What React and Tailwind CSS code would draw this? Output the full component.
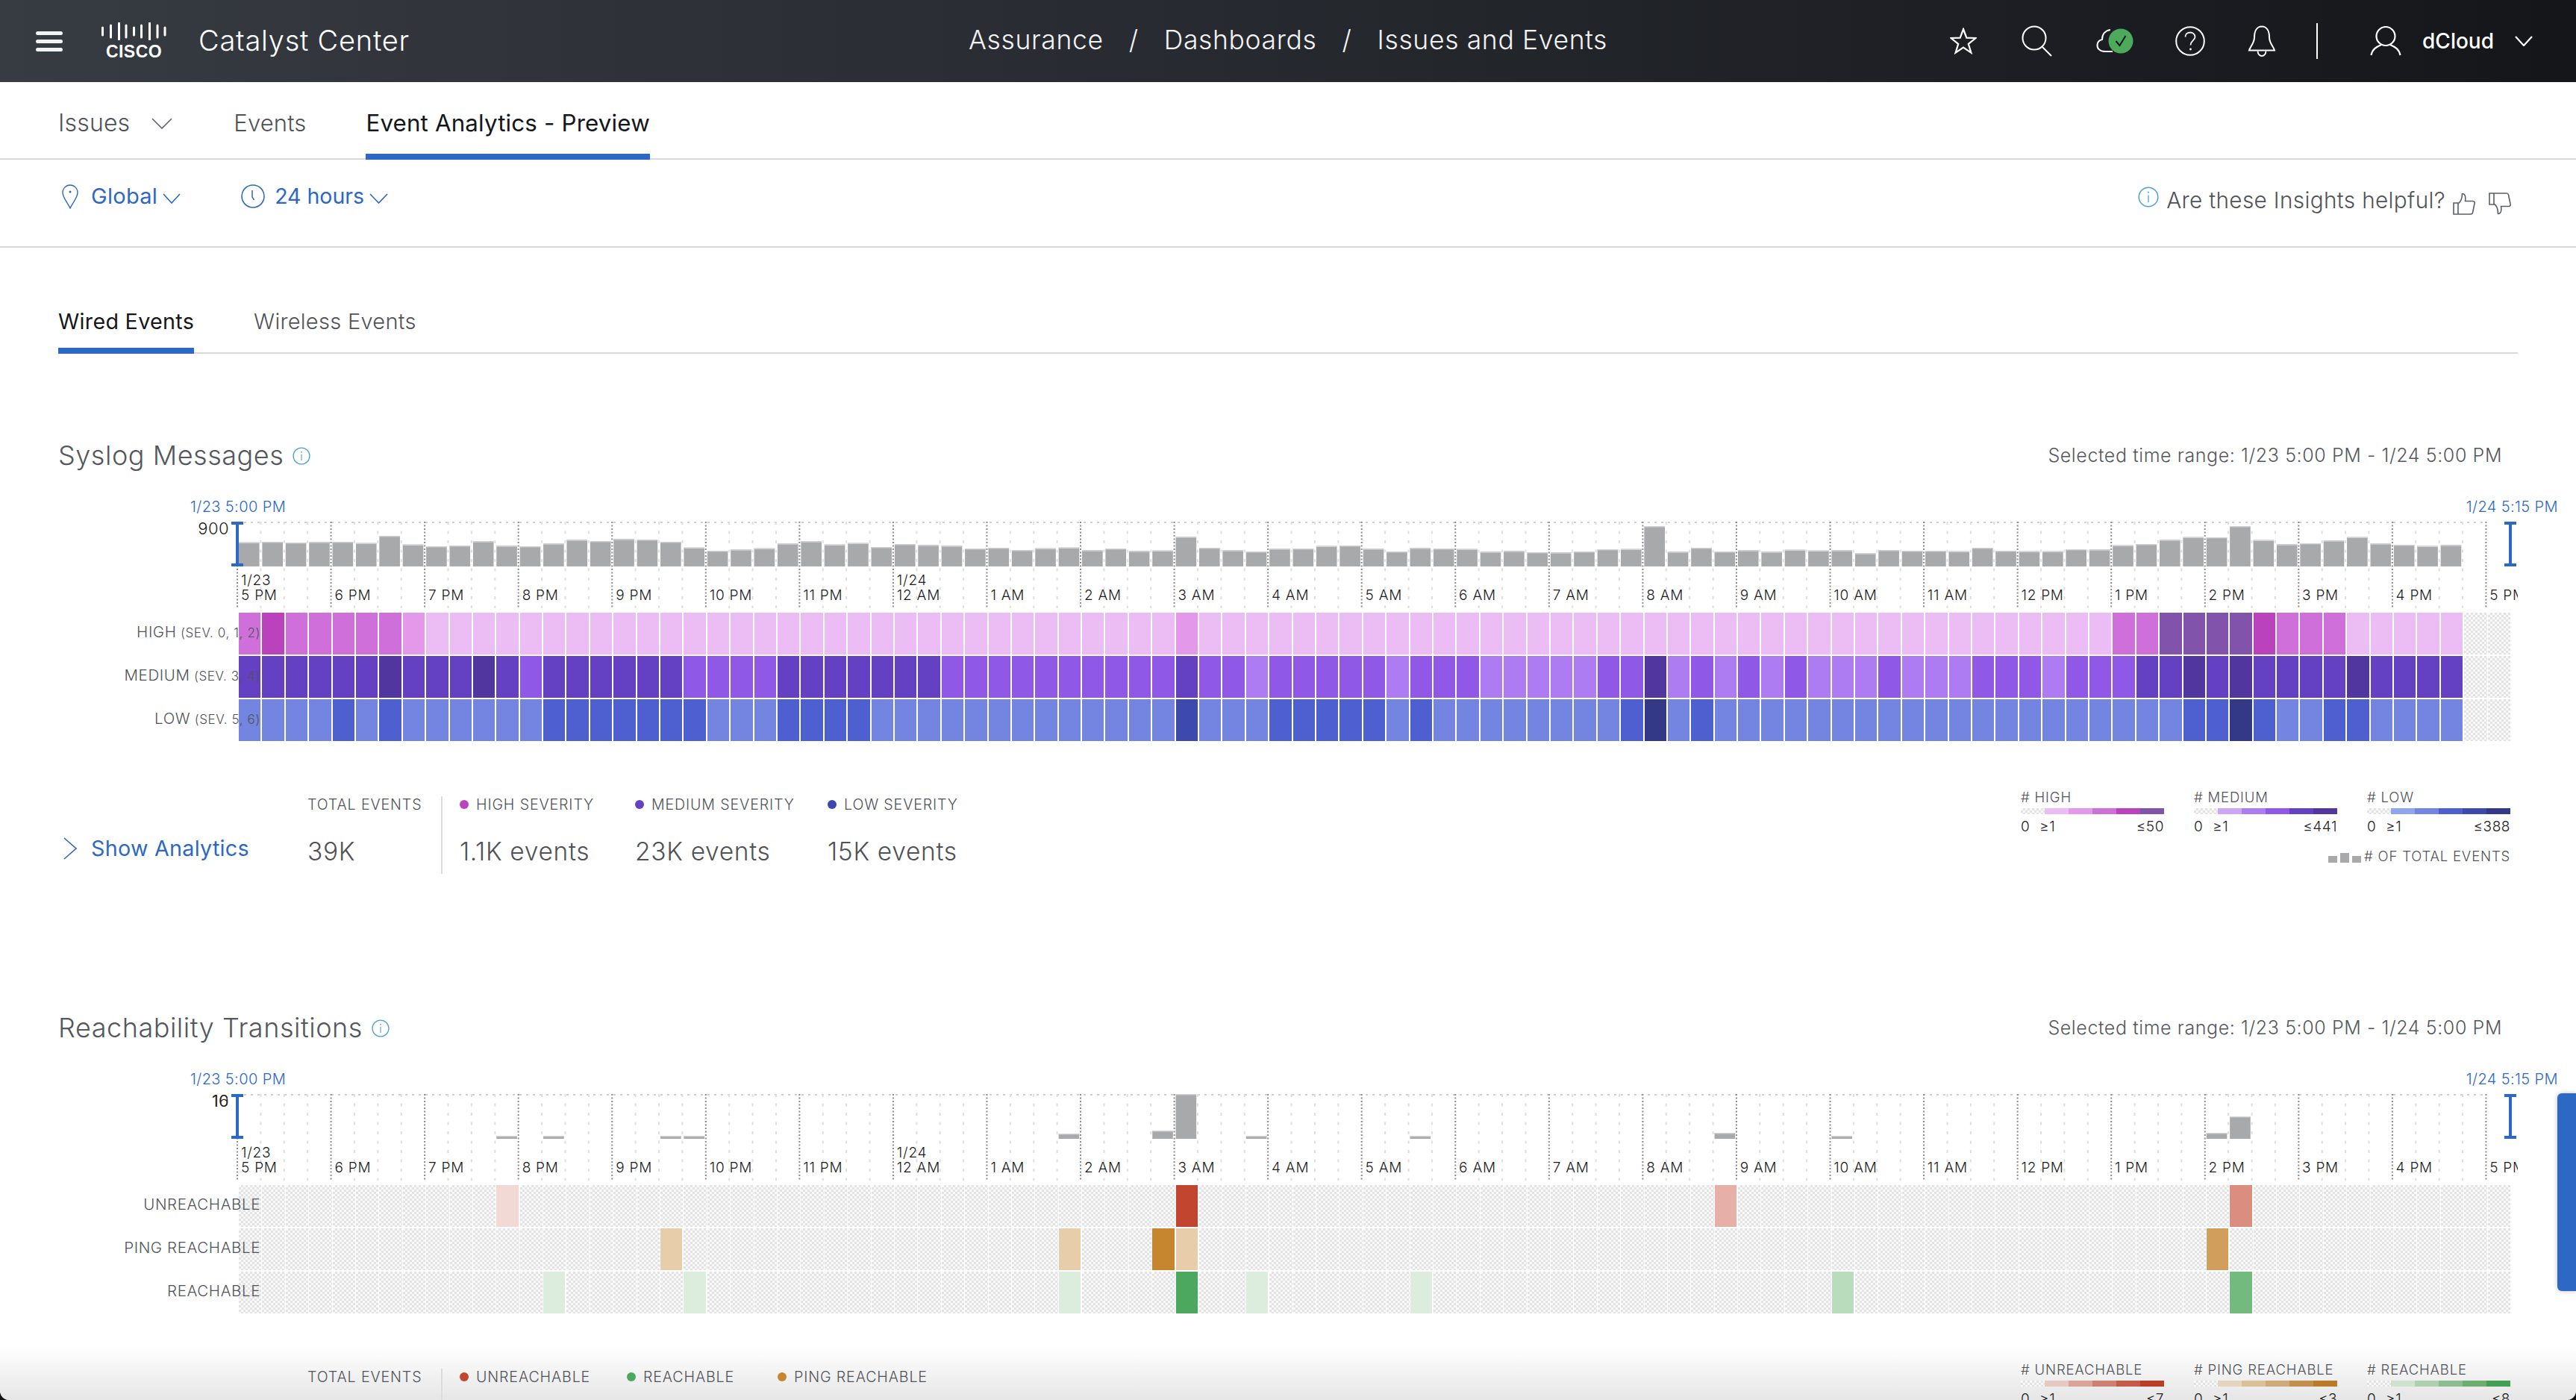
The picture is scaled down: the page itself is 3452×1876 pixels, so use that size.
import React from "react";

const BLUE = "#2d68c4";
const TOPS = [233,231,234,232,231,236,207,242,249,246,229,247,249,238,223,228,220,222,231,254,267,262,257,238,229,242,236,252,240,244,247,258,255,264,257,254,265,258,268,266,211,255,265,270,259,258,248,246,259,270,256,258,260,271,268,273,274,270,261,260,168,271,255,270,265,271,263,266,265,277,264,267,267,269,255,267,269,269,261,262,245,240,223,212,213,168,224,241,237,226,212,238,243,248,244];
const SYSLOG_BARS = TOPS.map((t, i) => [i, (330 - t) / 3]);
const REACH_BARS = [[11,4],[13,4],[18,4],[19,4],[35,7],[39,11],[40,60],[43,4],[50,4],[63,8],[68,4],[84,8],[85,30]];

const HOURS = ["5 PM","6 PM","7 PM","8 PM","9 PM","10 PM","11 PM","12 AM","1 AM","2 AM","3 AM","4 AM","5 AM","6 AM","7 AM","8 AM","9 AM","10 AM","11 AM","12 PM","1 PM","2 PM","3 PM","4 PM","5 PM"];

const HATCH = "bg-[repeating-conic-gradient(#e3e3e3_0%_25%,#f9f9f9_0%_50%)] bg-[length:6px_6px]";

const sevRows = [
  { label: "HIGH", sub: "(SEV. 0, 1, 2)",
    data: "34333332" + "1".repeat(32) + "2" + "1".repeat(39) + "335555433311111",
    colors: [HATCH, "bg-[#ecbcf5]", "bg-[#e498e9]", "bg-[#cf70da]", "bg-[#ba42bc]", "bg-[#8253ab]"] },
  { label: "MEDIUM", sub: "(SEV. 3, 4)",
    data: "444444544454344444433" + "334444444" + "3333333333" + "4" + "3323333323" + "33" + "22222" + "33" + "5" + "232323" + "222" + "3" + "222" + "333" + "2" + "3" + "3344545444454444",
    colors: [HATCH, "bg-[#cba7f6]", "bg-[#ad7cf3]", "bg-[#8f58e7]", "bg-[#6440c2]", "bg-[#52369f]"] },
  { label: "LOW", sub: "(SEV. 5, 6)",
    data: "2222" + "3" + "2" + "3" + "222222" + "3333333" + "2" + "22" + "3333" + "2".repeat(13) + "4" + "222" + "3333323" + "2".repeat(8) + "3" + "5" + "2" + "3" + "2".repeat(16) + "2222" + "3353223322222".slice(0, 12),
    colors: [HATCH, "bg-[#8fa6ee]", "bg-[#7385e0]", "bg-[#4e60cf]", "bg-[#3d49ad]", "bg-[#333887]"] },
];

const reachRow = (marks) => {
  const a = Array(97).fill(0);
  Object.entries(marks).forEach(([k, v]) => { a[Number(k)] = v; });
  return a.join("");
};

const reachRows = [
  { label: "UNREACHABLE", data: reachRow({ 11: 1, 40: 4, 63: 2, 85: 3 }),
    colors: [HATCH, "bg-[#f3d9d5]", "bg-[#e6b0a8]", "bg-[#db8d80]", "bg-[#c2462f]"] },
  { label: "PING REACHABLE", data: reachRow({ 18: 1, 35: 1, 39: 3, 40: 1, 84: 2 }),
    colors: [HATCH, "bg-[#e8cdaa]", "bg-[#d19f5b]", "bg-[#c5862f]"] },
  { label: "REACHABLE", data: reachRow({ 13: 1, 19: 1, 35: 1, 40: 3, 43: 1, 50: 1, 68: 4, 85: 2 }),
    colors: [HATCH, "bg-[#dcecdd]", "bg-[#72ba7d]", "bg-[#4ca85e]", "bg-[#b9dcbc]"] },
];

function Chevron({ className = "", color = "currentColor", w = 24, h = 14, sw = 2 }) {
  return (
    <svg width={w} height={h} viewBox={`0 0 ${w} ${h}`} className={className} fill="none">
      <path d={`M1 1 L${w / 2} ${h - 1} L${w - 1} 1`} stroke={color} strokeWidth={sw} />
    </svg>
  );
}

function InfoIcon({ size = 28, color = "#4d9fd6" }) {
  return (
    <svg width={size} height={size} viewBox="0 0 28 28" fill="none">
      <circle cx="14" cy="14" r="12.8" stroke={color} strokeWidth="1.5" />
      <path d="M14 11.5V21" stroke={color} strokeWidth="1.3" />
      <circle cx="14" cy="7.8" r="1" fill={color} />
    </svg>
  );
}

function CiscoLogo() {
  const xs = [1.5, 12.5, 23.5, 33, 43.5, 53.5, 64.5, 75, 85];
  const hs = [10, 16, 23, 16, 10, 16, 23, 16, 10];
  return (
    <div className="flex flex-col items-center w-[87px] shrink-0">
      <svg width="87" height="24" viewBox="0 0 87 24" fill="none">
        {xs.map((x, i) => (
          <line key={i} x1={x} x2={x} y1={12 - hs[i] / 2} y2={12 + hs[i] / 2} stroke="#fff" strokeWidth="3" strokeLinecap="round" />
        ))}
      </svg>
      <span className="font-['Liberation_Sans',sans-serif] font-bold text-[23px] leading-[22px] tracking-[0.02em] text-white mt-[4px]">CISCO</span>
    </div>
  );
}

function Header() {
  const s = "#fff";
  return (
    <div className="grid grid-cols-[1fr_auto_1fr] items-center h-[110px] bg-[linear-gradient(90deg,#373b42,#14161a)] text-white">
      <div className="flex items-center pl-[48px]">
        <svg width="36" height="30" viewBox="0 0 36 30" fill="#f2f2f2" className="shrink-0">
          <rect y="2" width="36" height="5" rx="2.5" />
          <rect y="13" width="36" height="5" rx="2.5" />
          <rect y="24" width="36" height="5" rx="2.5" />
        </svg>
        <div className="ml-[52px]"><CiscoLogo /></div>
        <span className="ml-[43px] pb-[3px] text-[38px] leading-[44px] font-light tracking-[0.02em]">Catalyst Center</span>
      </div>
      <div className="flex items-center pb-[3px] text-[35.5px] leading-[44px] font-light text-[#f2f2f2] tracking-[0.018em]">
        <span>Assurance</span>
        <span className="mx-[34px]">/</span>
        <span>Dashboards</span>
        <span className="mx-[34px]">/</span>
        <span>Issues and Events</span>
      </div>
      <div className="flex items-center justify-end pr-[58px]">
        <svg width="36" height="36" viewBox="0 0 36 36" fill="none">
          <path d="M18 2 L22.3 13.6 L34.5 14 L24.8 21.8 L28.4 33.6 L18 26.6 L7.6 33.6 L11.2 21.8 L1.5 14 L13.7 13.6 Z" stroke={s} strokeWidth="2.2" strokeLinejoin="miter" />
        </svg>
        <svg width="42" height="42" viewBox="0 0 42 42" fill="none" className="ml-[60px]">
          <circle cx="17" cy="17" r="15.5" stroke={s} strokeWidth="2" />
          <path d="M28 29 L40 41" stroke={s} strokeWidth="2" />
        </svg>
        <svg width="50" height="34" viewBox="0 0 50 34" fill="none" className="ml-[58px]">
          <path d="M22 31 H12 C5 31 1 27 1.5 22 C2 18 5 15.5 8 15 C8 8 12 3 19 2" stroke={s} strokeWidth="2" />
          <circle cx="33" cy="17" r="16.5" fill="#4daa5d" />
          <path d="M26.5 17 L31.5 23 L39.5 10" stroke="#17191d" strokeWidth="2" />
        </svg>
        <svg width="40" height="40" viewBox="0 0 40 40" fill="none" className="ml-[56px]">
          <circle cx="20" cy="20" r="18.8" stroke={s} strokeWidth="2" />
          <path d="M13.5 14.5 C13.5 10.5 16.5 8.5 20 8.5 C23.5 8.5 26.5 11 26.5 14.5 C26.5 19 20.5 19.5 20.5 25.5" stroke={s} strokeWidth="1.8" />
          <circle cx="20.5" cy="31" r="1.4" fill={s} />
        </svg>
        <svg width="38" height="42" viewBox="0 0 38 42" fill="none" className="ml-[57px]">
          <path d="M19 1.5 C12 1.5 9 8 9 16 C9 24 3.5 28 2 33.5 H36 C34.5 28 29 24 29 16 C29 8 26 1.5 19 1.5 Z" stroke={s} strokeWidth="2" />
          <path d="M13.5 34.5 C14 43 24 43 24.5 34.5" stroke={s} strokeWidth="2" />
        </svg>
        <div className="ml-[54px] w-[2px] h-[48px] bg-white" />
        <svg width="42" height="40" viewBox="0 0 42 40" fill="none" className="ml-[70px]">
          <ellipse cx="21" cy="13.5" rx="12.5" ry="12.5" stroke={s} strokeWidth="2.2" />
          <path d="M1.5 39 C3 31 8 28 15 25 M40.5 39 C39 31 34 28 27 25" stroke={s} strokeWidth="2.2" />
        </svg>
        <span className="ml-[28px] text-[28px] leading-[40px] font-medium">dCloud</span>
        <Chevron className="ml-[28px]" color="#fff" w={24} h={14} sw={2.2} />
      </div>
    </div>
  );
}

function SubTabs() {
  const tab = "h-[104px] pt-[36px] leading-[38px] tracking-[0.005em]";
  return (
    <div className="flex h-[104px] border-b-2 border-[#d9d9dd] pl-[78px]">
      <div className={`${tab} text-[32px] flex items-start font-light text-[#4f5359]`}>
        <span>Issues</span>
        <Chevron className="ml-[29px] mt-[12px]" color="#5f6368" w={28} h={15} sw={1.6} />
      </div>
      <div className={`${tab} text-[31px] ml-[82px] font-light text-[#4f5359]`}>Events</div>
      <div className={`${tab} text-[31.3px] ml-[80px] text-[#15171a] font-normal border-b-[8px] border-[#2d68c4]`}>Event Analytics - Preview</div>
    </div>
  );
}

function Thumb({ flip }) {
  return (
    <svg width="30" height="30" viewBox="0 0 30 30" fill="none" className={flip ? "ml-[18px] mt-[7px] -scale-y-100" : "ml-[10px] mt-[7px]"}>
      <path d="M1 14 H7 V29 H1 Z M7 15 C10 13 12.5 8 12.5 1.5 C16 1.5 17.5 5 16.5 11.5 H27 C29 11.5 29.5 13.5 29 15 L26.5 27 C26 28.5 25 29 24 29 H7" stroke="#5b5f66" strokeWidth="1.6" />
    </svg>
  );
}

function FilterRow() {
  const c = BLUE;
  return (
    <div className="flex items-start justify-between h-[118px] border-b-2 border-[#d9d9dd] pl-[83px] pr-[87px]">
      <div className="flex items-start pt-[32px] text-[#2d68c4] text-[29px] leading-[34px] tracking-[0.01em]">
        <svg width="22" height="33" viewBox="0 0 22 33" fill="none" className="mt-[1px]">
          <path d="M11 1 C5 1 1 6 1 11 C1 18 8 25 11 32 C14 25 21 18 21 11 C21 6 17 1 11 1 Z" stroke={c} strokeWidth="1.4" />
          <circle cx="11" cy="10" r="1.5" fill={c} />
        </svg>
        <span className="ml-[17px]">Global</span>
        <Chevron className="ml-[7px] mt-[13px]" color={c} w={24} h={14} sw={1.6} />
        <svg width="32" height="32" viewBox="0 0 32 32" fill="none" className="ml-[81px] mt-[1px]">
          <circle cx="16" cy="16" r="15" stroke={c} strokeWidth="1.6" />
          <path d="M15 8 V17 L17.5 21" stroke={c} strokeWidth="1.5" />
        </svg>
        <span className="ml-[13px] text-[28.5px] tracking-normal">24 hours</span>
        <Chevron className="ml-[7px] mt-[13px]" color={c} w={25} h={14} sw={1.6} />
      </div>
      <div className="flex items-start pt-[37px]">
        <span className="mt-[-1px]"><InfoIcon size={28} /></span>
        <span className="ml-[10px] text-[29.7px] leading-[34px] font-light text-[#4f5359] tracking-[0.012em]">Are these Insights helpful?</span>
        <Thumb />
        <Thumb flip />
      </div>
    </div>
  );
}

function WiredTabs() {
  return (
    <div className="mx-[78px] flex h-[142px] border-b-2 border-[#d9d9dd]">
      <div className="h-[142px] pt-[80px] text-[28.7px] leading-[38px] text-[#15171a] border-b-[8px] border-[#2d68c4] tracking-[0.01em]">Wired Events</div>
      <div className="h-[142px] pt-[80px] ml-[80px] text-[29px] leading-[38px] font-light text-[#4f5359] tracking-[0.01em]">Wireless Events</div>
    </div>
  );
}

const PITCH = 31.39;

function PlotArt({ bars }) {
  const minor = [];
  for (let i = 0; i <= 96; i++) if (i % 4 !== 0) minor.push(i);
  const major = [];
  for (let i = 0; i <= 24; i++) major.push(i);
  return (
    <svg width="3056" height="122" viewBox="0 0 3056 122" className="absolute inset-0 overflow-visible" fill="none">
      <line x1="0" x2="3014" y1="1" y2="1" stroke="#cfcfcf" strokeWidth="2" strokeDasharray="3 6" />
      {minor.map((i) => (
        <line key={i} x1={i * PITCH} x2={i * PITCH} y1="0" y2="116" stroke="#dedede" strokeWidth="2" strokeDasharray="4 8.5" />
      ))}
      {major.map((i) => (
        <line key={i} x1={i * 4 * PITCH} x2={i * 4 * PITCH} y1="0" y2="117" stroke="#8b8b8b" strokeWidth="2" strokeDasharray="2 2.5" />
      ))}
      {bars.map(([i, h]) => (
        <g key={i}>
          <rect x={2 + i * PITCH} y={60 - h} width="27.6" height={h} fill="#a8a9ab" />
          <rect x={2 + i * PITCH} y={60 - h} width="27.6" height="1.4" fill="#d3d3d5" />
        </g>
      ))}
      <g fill={BLUE}>
        <rect x="-8" y="0" width="16" height="4" />
        <rect x="-8" y="56" width="16" height="4" />
        <rect x="-2" y="0" width="4" height="60" />
        <rect x="3038" y="0" width="16" height="4" />
        <rect x="3038" y="56" width="16" height="4" />
        <rect x="3044" y="0" width="4" height="60" />
      </g>
    </svg>
  );
}

function Plot({ bars, max }) {
  return (
    <div className="relative ml-[318px] w-[3056px] h-[122px] mt-[8px]">
      <PlotArt bars={bars} />
      <div className="absolute right-full top-[-3px] mr-[11px] text-[22px] leading-[24px] font-light text-[#222] tracking-[0.02em] grid">
        {max.map((m) => (<span key={m} className="col-start-1 row-start-1 text-right">{m}</span>))}
      </div>
      <div className="relative flex h-[108px] items-end overflow-x-clip">
        {HOURS.map((h, i) => (
          <div key={i} className="w-[125.56px] shrink-0 pl-[5px] text-[19px] leading-[19.5px] font-light text-[#1c1c1e] tracking-[0.04em] whitespace-nowrap">
            {i === 0 && <div>1/23</div>}
            {i === 7 && <div>1/24</div>}
            <div>{h}</div>
          </div>
        ))}
      </div>
    </div>
  );
}

function HeatRows({ rows }) {
  return (
    <div className="flex flex-col gap-y-[2px]">
      {rows.map((r) => (
        <div key={r.label} className="flex h-[56px]">
          <div className="w-[349px] -mr-[29px] shrink-0 relative z-10 text-right text-[20.5px] leading-[56px] font-light text-[#4f5359] tracking-[0.03em] whitespace-nowrap -mt-[2px]">
            {r.label}
            {r.sub && <span className="text-[17px]"> {r.sub}</span>}
          </div>
          <div className="grid w-[3043px] h-[56px] grid-cols-[repeat(97,1fr)] gap-x-[2px]">
            {Array.from({ length: 97 }).map((_, i) => {
              const lv = Number(r.data[i] || 0);
              return <div key={i} className={lv === 0 ? `${r.colors[0]} -mr-[1px]` : r.colors[lv]} />;
            })}
          </div>
        </div>
      ))}
    </div>
  );
}

function Legend({ items, showTotal }) {
  return (
    <div className="-mt-[9px] pr-[10px] shrink-0">
      <div className="flex gap-x-[40px]">
        {items.map((l) => (
          <div key={l.label} className="w-[192px]">
            <div className="h-[20px] text-[18.5px] leading-[20px] font-light text-[#4f5359] tracking-[0.045em] whitespace-nowrap">{l.label}</div>
            <div className="mt-[5px] flex h-[8px]">
              <div className={`flex-1 ${HATCH}`} />
              {l.colors.map((c) => (<div key={c} className={`flex-1 ${c}`} />))}
            </div>
            <div className="mt-[7px] h-[20px] flex text-[19px] leading-[20px] font-light text-[#222] tracking-[0.03em]">
              <span>0</span>
              <span className="ml-[13px]">≥1</span>
              <span className="ml-auto">{l.max}</span>
            </div>
          </div>
        ))}
      </div>
      {showTotal && (
        <div className="mt-[19px] h-[20px] flex items-end justify-end text-[18.5px] leading-[20px] font-light text-[#4f5359] tracking-[0.045em]">
          <svg width="44" height="13" viewBox="0 0 44 13" fill="#a8a9ab" className="mb-[1px]">
            <rect x="0" y="4" width="12" height="9" />
            <rect x="16" y="0" width="12" height="13" />
            <rect x="32" y="4" width="12" height="9" />
          </svg>
          <span className="ml-[4px]"># OF TOTAL EVENTS</span>
        </div>
      )}
    </div>
  );
}

function Stats({ cols, total, legend, showTotal, showAnalytics }) {
  const label = "h-[22px] text-[19.6px] leading-[22px] font-light text-[#4f5359] tracking-[0.045em] whitespace-nowrap";
  const value = "mt-[35px] h-[34px] text-[33.5px] leading-[34px] font-light text-[#4f5359] tracking-[0.02em] whitespace-nowrap";
  return (
    <div className="flex justify-between mt-[74px] mx-[78px] h-[104px] items-start">
      <div className="flex items-start">
        <div className="w-[334px] mt-[52px] h-[36px] pl-[7px] flex items-center text-[#2d68c4] text-[28.7px] leading-[36px] tracking-[0.01em]">
          {showAnalytics && (
            <>
              <svg width="18" height="30" viewBox="0 0 18 30" fill="none" className="shrink-0">
                <path d="M1 1 L17 15 L1 29" stroke={BLUE} strokeWidth="1.6" />
              </svg>
              <span className="ml-[19px] whitespace-nowrap">Show Analytics</span>
            </>
          )}
        </div>
        <div className="w-[179px]">
          <div className={label}>TOTAL EVENTS</div>
          <div className={value}>39K</div>
        </div>
        <div className="w-[2px] h-[104px] bg-[#dcdcdc]" />
        <div className="flex pl-[23px]">
          {cols.map((c) => (
            <div key={c.name} className={c.w}>
              <div className={`flex items-center ${label}`}>
                <span className={`w-[12px] h-[12px] rounded-full shrink-0 mr-[10px] ${c.dot}`} />
                {c.name}
              </div>
              <div className={value}>{c.value}</div>
            </div>
          ))}
        </div>
      </div>
      <Legend items={legend} showTotal={showTotal} />
    </div>
  );
}

function Section({ title, max, bars, rows, stats }) {
  return (
    <section className="pb-[184px]">
      <div className="mx-[78px] pr-[21px] flex items-center justify-between h-[44px]">
        <div className="flex items-center">
          <span className="text-[36px] leading-[44px] font-light text-[#54585e] tracking-[0.015em]">{title}</span>
          <span className="ml-[12px] mt-[2px]"><InfoIcon size={24} /></span>
        </div>
        <span className="text-[25px] leading-[44px] font-light text-[#54585e] tracking-[0.024em]">Selected time range: 1/23 5:00 PM - 1/24 5:00 PM</span>
      </div>
      <div className="mt-[35px] mb-[1px] pl-[255px] pr-[24px] flex justify-between h-[24px] text-[#2d68c4] text-[20px] leading-[24px] font-light tracking-[0.02em]">
        <span>1/23 5:00 PM</span>
        <span>1/24 5:15 PM</span>
      </div>
      <Plot bars={bars} max={max} />
      <HeatRows rows={rows} />
      <Stats {...stats} />
    </section>
  );
}

export default function App() {
  return (
    <div className="relative w-[3452px] h-[1876px] overflow-hidden bg-white font-['Inter','Noto_Sans',sans-serif]">
      <div className="absolute inset-x-0 bottom-0 h-[72px] bg-gradient-to-b from-white to-[#e6e6e6]" />
      <div className="relative">
        <Header />
        <SubTabs />
        <FilterRow />
        <WiredTabs />
        <div className="pt-[114px]">
          <Section
            title="Syslog Messages"
            max={["900"]}
            bars={SYSLOG_BARS}
            rows={sevRows}
            stats={{
              showAnalytics: true,
              showTotal: true,
              cols: [
                { name: "HIGH SEVERITY", value: "1.1K events", dot: "bg-[#ba42bc]", w: "w-[235px]" },
                { name: "MEDIUM SEVERITY", value: "23K events", dot: "bg-[#6440c2]", w: "w-[258px]" },
                { name: "LOW SEVERITY", value: "15K events", dot: "bg-[#3d49ad]", w: "w-[200px]" },
              ],
              legend: [
                { label: "# HIGH", max: "≤50", colors: ["bg-[#ecbcf5]", "bg-[#e498e9]", "bg-[#cf70da]", "bg-[#ba42bc]", "bg-[#8253ab]"] },
                { label: "# MEDIUM", max: "≤441", colors: ["bg-[#cba7f6]", "bg-[#ad7cf3]", "bg-[#8f58e7]", "bg-[#6440c2]", "bg-[#52369f]"] },
                { label: "# LOW", max: "≤388", colors: ["bg-[#8fa6ee]", "bg-[#7385e0]", "bg-[#4e60cf]", "bg-[#3d49ad]", "bg-[#333887]"] },
              ],
            }}
          />
          <Section
            title="Reachability Transitions"
            max={["10", "16"]}
            bars={REACH_BARS}
            rows={reachRows}
            stats={{
              showAnalytics: false,
              showTotal: false,
              cols: [
                { name: "UNREACHABLE", value: "", dot: "bg-[#c2462f]", w: "w-[224px]" },
                { name: "REACHABLE", value: "", dot: "bg-[#4ca85e]", w: "w-[202px]" },
                { name: "PING REACHABLE", value: "", dot: "bg-[#c5862f]", w: "w-[220px]" },
              ],
              legend: [
                { label: "# UNREACHABLE", max: "≤7", colors: ["bg-[#e6c9c3]", "bg-[#d9a398]", "bg-[#cd7f71]", "bg-[#c25c49]", "bg-[#b83f26]"] },
                { label: "# PING REACHABLE", max: "≤3", colors: ["bg-[#e5d5bf]", "bg-[#dbbf97]", "bg-[#cfa978]", "bg-[#c38f4e]", "bg-[#b97b28]"] },
                { label: "# REACHABLE", max: "≤8", colors: ["bg-[#cfe2d0]", "bg-[#aed0b0]", "bg-[#8bbd8f]", "bg-[#6cae72]", "bg-[#449e53]"] },
              ],
            }}
          />
        </div>
      </div>
      <div className="absolute right-0 top-[1465px] w-[25px] h-[265px] rounded-l-[6px] bg-[#2d68c4] shadow-[0_0_6px_rgba(0,0,0,0.25)]" />
      <svg width="10" height="10" viewBox="0 0 10 10" className="absolute left-0 bottom-0"><path d="M0 0 Q2 8 10 10 H0 Z" fill="#111" /></svg>
      <svg width="10" height="10" viewBox="0 0 10 10" className="absolute right-0 bottom-0"><path d="M10 0 Q8 8 0 10 H10 Z" fill="#111" /></svg>
    </div>
  );
}
